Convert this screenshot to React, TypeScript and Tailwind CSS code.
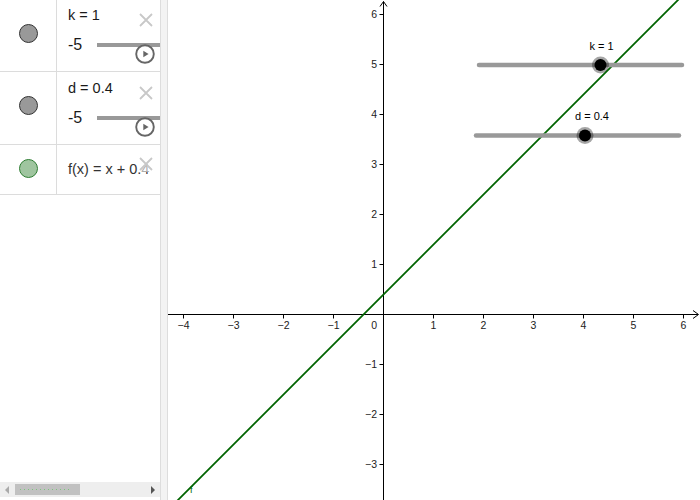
import React from "react";

const OX = 215.5;
const OY = 314.5;
const U = 50;

function XIcon() {
  return (
    <svg width="16" height="16" viewBox="0 0 16 16">
      <path d="M2 2 L14 14 M14 2 L2 14" stroke="#c8c8c8" strokeWidth="1.8" fill="none" />
    </svg>
  );
}

function PlayIcon() {
  return (
    <svg width="20" height="20" viewBox="0 0 20 20">
      <circle cx="10" cy="10" r="8.8" fill="#fff" stroke="#666" strokeWidth="1.9" />
      <path d="M8.3 6.8 L13.6 10 L8.3 13.2 Z" fill="#666" />
    </svg>
  );
}

function SliderRow({ label, height, textTop, xTop, playTop }: { label: string; height: string; textTop: string; xTop: string; playTop: string }) {
  return (
    <div className={`relative flex ${height} shrink-0 border-b border-[#dcdcdc]`}>
      <div className="flex w-[57px] shrink-0 items-center justify-center border-r border-[#dcdcdc] pb-[5px]">
        <div className="h-[19px] w-[19px] rounded-full border border-[#333] bg-[#999]" />
      </div>
      <div className={`flex-1 overflow-hidden pl-[11px] ${textTop}`}>
        <div className="text-[14.5px] leading-[18px] text-[#1a1a1a] whitespace-nowrap">{label}</div>
        <div className="mt-[11px] flex items-center">
          <span className="w-[29px] shrink-0 text-[16px] leading-[20px] text-[#1a1a1a]">-5</span>
          <div className="h-[4px] w-[100px] shrink-0 bg-[#999]" />
        </div>
      </div>
      <div className={`absolute left-[138px] ${xTop}`}>
        <XIcon />
      </div>
      <div className={`absolute left-[135px] ${playTop}`}>
        <PlayIcon />
      </div>
    </div>
  );
}

function Graphics() {
  const xs = [-4, -3, -2, -1, 1, 2, 3, 4, 5, 6];
  const ys = [-3, -2, -1, 1, 2, 3, 4, 5, 6];
  const fmt = (n: number) => (n < 0 ? "\u2212" + Math.abs(n) : String(n));
  return (
    <svg width="532" height="500" viewBox="0 0 532 500" className="block" fontFamily="Liberation Sans, Arial, sans-serif">
      {/* axes */}
      <line x1="0" y1={OY} x2="530" y2={OY} stroke="#000" strokeWidth="1" />
      <path d={`M525 ${OY - 4} L530.5 ${OY} L525 ${OY + 4}`} stroke="#000" fill="none" strokeWidth="1" />
      <line x1={OX} y1="500" x2={OX} y2="1.5" stroke="#000" strokeWidth="1" />
      <path d={`M${OX - 3.5} 6.5 L${OX} 1.5 L${OX + 3.5} 6.5`} stroke="#000" fill="none" strokeWidth="1" />

      {xs.map((u) => (
        <g key={"x" + u}>
          <line x1={OX + U * u} y1={OY} x2={OX + U * u} y2={OY + 4} stroke="#000" strokeWidth="1" />
          <text x={OX + U * u} y={OY + 14} fontSize="10.5" textAnchor="middle" fill="#222">
            {fmt(u)}
          </text>
        </g>
      ))}
      {ys.map((v) => (
        <g key={"y" + v}>
          <line x1={OX - 4} y1={OY - U * v} x2={OX} y2={OY - U * v} stroke="#000" strokeWidth="1" />
          <text x={OX - 6.5} y={OY - U * v + 3.5} fontSize="10.5" textAnchor="end" fill="#222">
            {fmt(v)}
          </text>
        </g>
      ))}
      <text x={OX - 6.5} y={OY + 14} fontSize="10.5" textAnchor="end" fill="#222">
        0
      </text>

      {/* function f(x) = x + 0.4 */}
      <line
        x1={OX + U * -5}
        y1={OY - U * -4.6}
        x2={OX + U * 7}
        y2={OY - U * 7.4}
        stroke="#006400"
        strokeWidth="1.8"
      />
      <text x="22" y="493" fontSize="9" fill="#006400">
        f
      </text>

      {/* slider k */}
      <line x1="311" y1="65" x2="514" y2="65" stroke="#999" strokeWidth="4.5" strokeLinecap="round" />
      <circle cx="432.5" cy="65" r="8.5" fill="#000" fillOpacity="0.35" />
      <circle cx="432.5" cy="65" r="6" fill="#000" />
      <text x="433.5" y="50" fontSize="11" textAnchor="middle" fill="#000">
        k = 1
      </text>

      {/* slider d */}
      <line x1="308" y1="135.5" x2="511" y2="135.5" stroke="#999" strokeWidth="4.5" strokeLinecap="round" />
      <circle cx="417" cy="135.5" r="8.5" fill="#000" fillOpacity="0.35" />
      <circle cx="417" cy="135.5" r="6" fill="#000" />
      <text x="424" y="120" fontSize="11" textAnchor="middle" fill="#000">
        d = 0.4
      </text>
    </svg>
  );
}

export default function App() {
  return (
    <div className="flex h-[500px] w-[700px] overflow-hidden bg-white font-['Liberation_Sans',Arial,sans-serif]">
      {/* Algebra view */}
      <div className="flex h-full w-[160px] shrink-0 flex-col">
        <SliderRow label="k = 1" height="h-[72px]" textTop="pt-[6px]" xTop="top-[12px]" playTop="top-[44px]" />
        <SliderRow label="d = 0.4" height="h-[73px]" textTop="pt-[7px]" xTop="top-[13px]" playTop="top-[45px]" />

        {/* function row */}
        <div className="relative flex h-[50px] shrink-0 border-b border-[#dcdcdc]">
          <div className="flex w-[57px] shrink-0 items-center justify-center border-r border-[#dcdcdc] pb-[2px]">
            <div className="h-[19px] w-[19px] rounded-full border border-[#2e7d32] bg-[#9fc59f]" />
          </div>
          <div className="flex flex-1 items-center overflow-hidden pl-[11px] pb-[1px]">
            <span className="whitespace-nowrap text-[14.5px] leading-[18px] text-[#333]">
              f(x)<span className="mx-[4px]">=</span>x<span className="mx-[4px]">+</span>0.4
            </span>
          </div>
          <div className="absolute left-[138px] top-[11px] bg-white/60">
            <XIcon />
          </div>
        </div>

        <div className="flex-1" />

        {/* horizontal scrollbar */}
        <div className="flex h-[15px] shrink-0 items-center bg-[#eeeeee]">
          <div className="ml-[5px] h-0 w-0 border-y-[4px] border-r-[4px] border-y-transparent border-r-[#aaaaaa]" />
          <div className="ml-[6px] flex h-[11px] w-[65px] items-center gap-[3px] bg-[#c1c1c1] pl-[5px]">
            {Array.from({ length: 13 }).map((_, i) => (
              <span key={i} className="h-[1px] w-[1px] shrink-0 bg-[#7cc47c]" />
            ))}
          </div>
          <div className="flex-1" />
          <div className="mr-[5px] h-0 w-0 border-y-[4px] border-l-[4px] border-y-transparent border-l-[#555555]" />
        </div>
        <div className="h-[3px] shrink-0" />
      </div>

      {/* splitter */}
      <div className="h-full w-[8px] shrink-0 border-x border-[#dddddd] bg-[#f3f3f3]" />

      {/* Graphics view */}
      <div className="h-full flex-1 overflow-hidden">
        <Graphics />
      </div>
    </div>
  );
}
